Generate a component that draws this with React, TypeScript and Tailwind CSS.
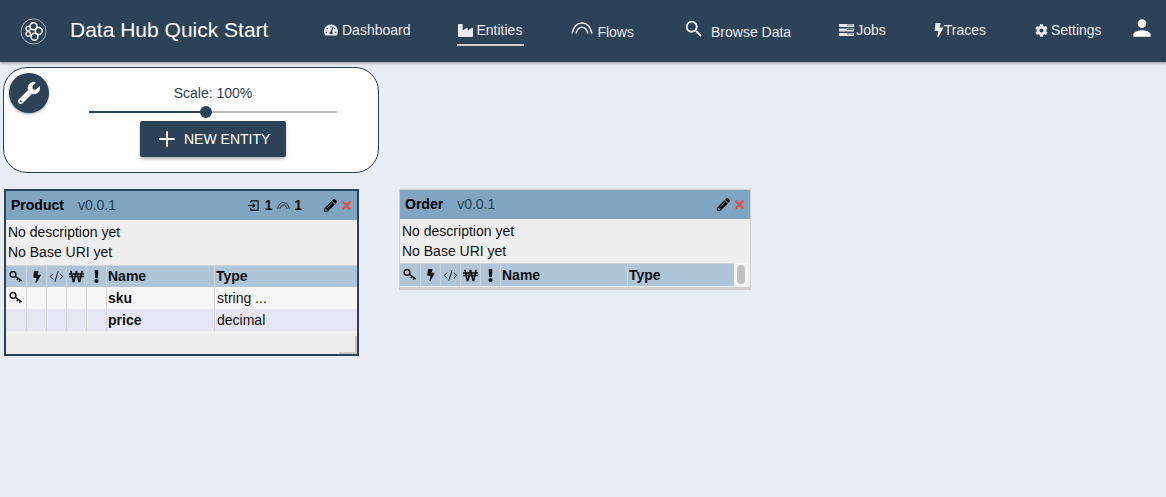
import { FaBolt, FaCog, FaExclamation, FaIndustry, FaPencilAlt, FaTachometerAlt, FaTimes, FaWonSign, FaWrench } from "react-icons/fa";
import { MdPerson, MdSearch } from "react-icons/md";
import { LuCodeXml, LuPlus } from "react-icons/lu";
import type { ReactNode } from "react";

const font = { fontFamily: '"Liberation Sans", Arial, sans-serif' };

const KeyIcon = () => (
  <svg viewBox="0 0 16 16" className="h-[14px] w-[14px]" fill="none" stroke="currentColor" strokeWidth="1.6">
    <circle cx="4.6" cy="5" r="3.3" />
    <path d="M7.2 7.2 14.6 12.6M10.4 9.6 9 11.6M13 11.5 11.8 13.4" />
  </svg>
);

const ArcIcon = ({ className }: { className: string }) => (
  <svg viewBox="0 0 22 12" className={className} fill="none" stroke="currentColor" strokeWidth="1.5">
    <path d="M1 11.5C2.500 5 6 1 11 1s8.500 4 10 10.500" />
    <path d="M5 11.500C6 7.500 8 5.200 11 5.200s5 2.300 6 6.300" />
  </svg>
);

const ServerIcon = () => (
  <svg viewBox="0 0 15 12" className="mr-[2px] h-[12px] w-[15px]" fill="currentColor">
    <path d="M0 0h15v3H0zM0 4.500h15v3H0zM0 9h15v3H0z" />
    <path d="M8 1h6M8 5.500h6M8 10h6" stroke="#2c4257" strokeWidth="0.8" />
  </svg>
);

const SignInIcon = () => (
  <svg viewBox="0 0 12 12" className="h-[11px] w-[11px]" fill="none" stroke="currentColor" strokeWidth="1.2">
    <path d="M3 1h8v10H3V8.500M3 3.500V1M0 6h7M5 3.800 7.300 6 5 8.200" />
  </svg>
);

const Logo = () => (
  <svg viewBox="0 0 28 28" className="h-[27px] w-[27px]" fill="none" stroke="white">
    <circle cx="14" cy="14" r="13" strokeWidth="0.6" />
    <circle cx="14" cy="8.500" r="3.600" strokeWidth="1.500" />
    <circle cx="19.500" cy="13.500" r="3.600" strokeWidth="1.500" />
    <circle cx="15" cy="19.500" r="3.600" strokeWidth="1.500" />
    <circle cx="8.500" cy="16.500" r="2.300" strokeWidth="1.300" />
    <circle cx="8.500" cy="11" r="2.300" strokeWidth="1.300" />
  </svg>
);

const NavItem = ({ icon, label, className, active }: { icon: ReactNode; label: string; className: string; active?: boolean }) => (
  <div className={`flex h-[60px] items-center self-start ${className}`}>
    <div className={`flex items-center ${active ? "relative" : ""}`}>
      {icon}
      <span>{label}</span>
      {active && <div className="absolute -bottom-[5px] -left-px -right-[2px] h-[2px] bg-[#c4ccd4]" />}
    </div>
  </div>
);

const columns = [
  { icon: <KeyIcon />, w: "w-[21px]" },
  { icon: <FaBolt className="text-[12px]" />, w: "w-[20px]" },
  { icon: <LuCodeXml className="text-[15px]" strokeWidth={1.5} />, w: "w-[20px]" },
  { icon: <FaWonSign className="text-[15px]" />, w: "w-[20px]" },
  { icon: <FaExclamation className="text-[13px]" />, w: "w-[20px]" },
];

const Cells = ({ children, name, type, bg }: { children?: ReactNode[]; name: string; type: string; bg: string }) => (
  <div className={`flex h-[22px] ${bg}`}>
    {columns.map((c, i) => (
      <div key={i} className={`flex ${c.w} shrink-0 items-center justify-center border-r border-[#d5d5d5]`}>
        {children?.[i]}
      </div>
    ))}
    <div className="flex w-[108px] shrink-0 items-center border-r border-[#d5d5d5] pl-px font-bold">{name}</div>
    <div className="flex flex-1 items-center pl-[2px]">{type}</div>
  </div>
);

const CardHeader = ({ name, extra }: { name: string; extra?: ReactNode }) => (
  <div className="flex h-[29px] items-center bg-[#7fa5c0] pl-[5px] pr-[4px] text-[14px]">
    <span className="font-bold text-black">{name}</span>
    <span className="ml-[14px] text-[#2c4257]">v0.0.1</span>
    <div className="ml-auto flex items-center">
      {extra}
      <FaPencilAlt className="text-[13px] text-black" />
      <FaTimes className="ml-[3px] text-[13px] text-[#d9534f]" />
    </div>
  </div>
);

const App = () => {
  return (
    <div className="h-[497px] w-[1166px] overflow-hidden bg-[#e8edf5]" style={font}>
      <header className="flex h-[62px] items-center bg-[#2c4257] text-[14px] text-[#e6eaee] shadow-[0_1px_3px_rgba(0,0,0,0.4)]">
        <div className="ml-[20px]">
          <Logo />
        </div>
        <span className="mb-[4px] ml-[23px] w-[254px] text-[21px] leading-none text-white">Data Hub Quick Start</span>
        <NavItem icon={<FaTachometerAlt className="mr-[4px] text-[14px]" />} label="Dashboard" className="" />
        <NavItem icon={<FaIndustry className="mr-[4px] text-[15px]" />} label="Entities" className="ml-[47px]" active />
        <NavItem icon={<ArcIcon className="mb-[8px] mr-[4px] h-[12px] w-[22px]" />} label="Flows" className="ml-[49px] pt-[4px]" />
        <NavItem icon={<MdSearch className="mb-[7px] mr-[6px] text-[22px]" />} label="Browse Data" className="ml-[49px] pt-[5px]" />
        <NavItem icon={<ServerIcon />} label="Jobs" className="ml-[48px]" />
        <NavItem icon={<FaBolt className="-mr-[2px] text-[14px]" />} label="Traces" className="ml-[46px]" />
        <NavItem icon={<FaCog className="mr-[3px] text-[13px]" />} label="Settings" className="ml-[49px]" />
        <div className="mb-[6px] ml-[27px]">
          <MdPerson className="text-[26px] text-white" />
        </div>
      </header>

      <main className="relative">
        <section className="relative ml-[3px] mt-[5px] h-[106px] w-[376px] rounded-[24px] border border-[#2c4257] bg-white">
          <div className="absolute left-[5px] top-[5px] flex h-[40px] w-[40px] items-center justify-center rounded-full bg-[#2c4257] shadow-[0_1px_3px_rgba(0,0,0,0.35)]">
            <FaWrench className="text-[22px] text-white" />
          </div>
          <div className="flex flex-col items-center pl-[85px] pr-[41px]">
            <div className="mt-[16px] text-[14px] leading-[18px] text-[#2c4257]">Scale: 100%</div>
            <div className="relative mt-[9px] h-[2px] w-[248px] bg-[#bdbdbd]">
              <div className="h-[2px] w-[117px] bg-[#2c4257]" />
              <div className="absolute left-[111px] top-[-5px] h-[12px] w-[12px] rounded-full bg-[#2c4257]" />
            </div>
            <button className="mt-[8px] flex h-[36px] w-[146px] items-center rounded-[2px] bg-[#2c4257] pl-[15px] text-[14px] font-medium text-white shadow-[0_2px_3px_rgba(0,0,0,0.3)]">
              <LuPlus className="mr-[5px] text-[24px]" strokeWidth={1.8} />
              NEW ENTITY
            </button>
          </div>
        </section>

        <article className="absolute left-[4px] top-[122px] flex h-[167px] w-[355px] flex-col border-2 border-[#2c4257] bg-[#eeeeee] text-[14px] text-[#111]">
          <CardHeader
            name="Product"
            extra={
              <div className="mr-[22px] flex items-center font-bold text-[#111]">
                <SignInIcon />
                <span className="ml-[5px]">1</span>
                <ArcIcon className="ml-[5px] h-[7px] w-[13px]" />
                <span className="ml-[4px]">1</span>
              </div>
            }
          />
          <div className="px-[2px] pt-[2px] leading-[20px]">
            <div>No description yet</div>
            <div>No Base URI yet</div>
          </div>
          <div className="mt-[3px] flex h-[22px] border-t border-[#d5d5d5] bg-[#aec6d8] font-bold">
            {columns.map((c, i) => (
              <div key={i} className={`flex ${c.w} shrink-0 items-center justify-center border-r border-[#c8d2da]`}>{c.icon}</div>
            ))}
            <div className="flex w-[108px] shrink-0 items-center border-r border-[#c8d2da] pl-px">Name</div>
            <div className="flex flex-1 items-center pl-px">Type</div>
          </div>
          <Cells name="sku" type="string ..." bg="bg-[#f7f7f7]">{[<KeyIcon key="k" />]}</Cells>
          <Cells name="price" type="decimal" bg="bg-[#e6e6f2]" />
          <div className="relative flex-1">
            <div className="absolute bottom-0 right-0 h-[2px] w-[18px] bg-[#c8c8c8]" />
            <div className="absolute bottom-0 right-0 h-[18px] w-[2px] bg-[#c8c8c8]" />
          </div>
        </article>

        <article className="absolute left-[399px] top-[122px] flex h-[101px] w-[352px] flex-col border border-[#cfcfcf] bg-[#eeeeee] text-[14px] text-[#111]">
          <CardHeader name="Order" />
          <div className="px-[2px] pt-[2px] leading-[20px]">
            <div>No description yet</div>
            <div>No Base URI yet</div>
          </div>
          <div className="mt-[2px] flex min-h-0 flex-1 pr-[15px]">
            <div className="flex h-[23px] flex-1 border-t border-[#d5d5d5] bg-[#aec6d8] font-bold">
              {columns.map((c, i) => (
                <div key={i} className={`flex ${c.w} shrink-0 items-center justify-center border-r border-[#c8d2da]`}>{c.icon}</div>
              ))}
              <div className="flex w-[127px] shrink-0 items-center border-r border-[#c8d2da] pl-px">Name</div>
              <div className="flex flex-1 items-center pl-px">Type</div>
            </div>
          </div>
          <div className="absolute bottom-[2px] right-[2px] top-[73px] w-[14px] bg-[#f6f6f6]">
            <div className="mx-auto mt-[2px] h-[19px] w-[8px] rounded-[4px] bg-[#c1c1c1]" />
          </div>
          <div className="h-[2px] bg-[#cfcfcf]" />
        </article>
      </main>
    </div>
  );
};

export default App;
